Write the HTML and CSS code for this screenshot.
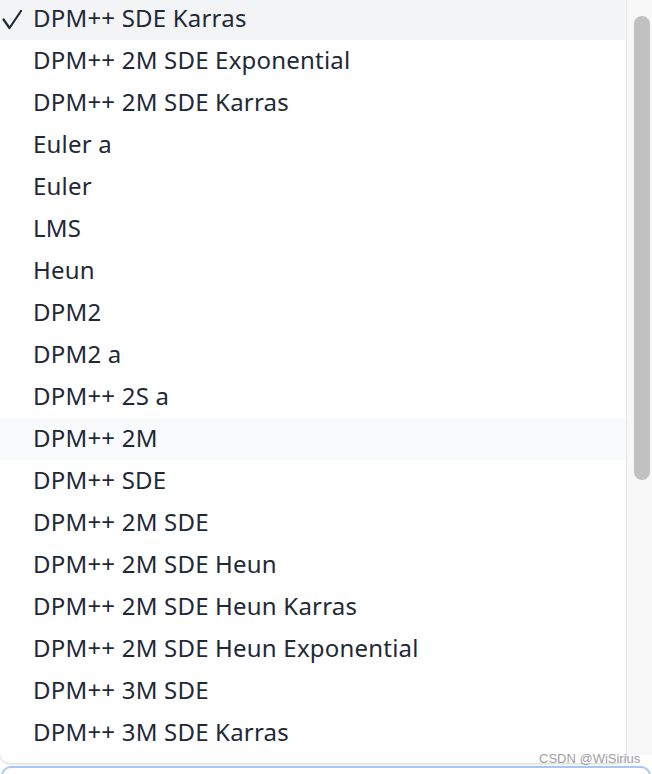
FILE: index.html
```html
<!DOCTYPE html>
<html>
<head>
<meta charset="utf-8">
<link rel="stylesheet" href="styles.css">
</head>
<body>
<div class="page">
  <div class="top">
    <div class="card">
      <ul class="options">
        <li class="option selected"><svg class="check" width="24" height="24" viewBox="0 0 24 24"><path d="M3.5 13.5 L9.5 22 L21 5" fill="none" stroke="#1f2937" stroke-width="2.2" stroke-linecap="round" stroke-linejoin="round"/></svg>DPM++ SDE Karras</li>
        <li class="option">DPM++ 2M SDE Exponential</li>
        <li class="option">DPM++ 2M SDE Karras</li>
        <li class="option">Euler a</li>
        <li class="option">Euler</li>
        <li class="option">LMS</li>
        <li class="option">Heun</li>
        <li class="option">DPM2</li>
        <li class="option">DPM2 a</li>
        <li class="option">DPM++ 2S a</li>
        <li class="option hover">DPM++ 2M</li>
        <li class="option">DPM++ SDE</li>
        <li class="option">DPM++ 2M SDE</li>
        <li class="option">DPM++ 2M SDE Heun</li>
        <li class="option">DPM++ 2M SDE Heun Karras</li>
        <li class="option">DPM++ 2M SDE Heun Exponential</li>
        <li class="option">DPM++ 3M SDE</li>
        <li class="option">DPM++ 3M SDE Karras</li>
      </ul>
    </div>
    <div class="track"><div class="thumb"></div></div>
  </div>
  <div class="input"></div>
  <div class="watermark">CSDN @WiSirius</div>
</div>
</body>
</html>
```
FILE: styles.css
```css
html, body {
  margin: 0;
  padding: 0;
  background: #ffffff;
  overflow: hidden;
}
.page {
  position: relative;
  width: 652px;
  height: 774px;
  overflow: hidden;
}
.top {
  display: flex;
  height: 763px;
}
.card {
  width: 627px;
  height: 763px;
  overflow: hidden;
  border-right: 1px solid #e6e6e6;
  border-radius: 0 0 10px 10px;
  box-shadow: 0 1px 3px rgba(0, 0, 0, 0.18);
  background: #ffffff;
  box-sizing: border-box;
}
.options {
  list-style: none;
  margin: -2px 0 0 0;
  padding: 0;
}
.option {
  position: relative;
  height: 42px;
  line-height: 40px;
  padding-left: 33px;
  font-family: "Noto Sans", "Open Sans", sans-serif;
  font-size: 24px;
  letter-spacing: 0.2px;
  color: #1f2937;
  white-space: nowrap;
}
.option.selected {
  background: #f3f4f6;
}
.option.hover {
  background: #f9fafb;
}
.check {
  position: absolute;
  left: 0;
  top: 8px;
}
.track {
  width: 25px;
  height: 755px;
  background: #f8f8f8;
  display: flex;
  justify-content: center;
  padding-top: 16px;
  box-sizing: border-box;
}
.thumb {
  width: 16px;
  height: 464px;
  margin-left: 5px;
  border-radius: 8px;
  background: #c1c1c1;
}
.input {
  margin: 3px 1px 0 1px;
  height: 30px;
  border: 2px solid #a7c7f2;
  border-radius: 10px;
  box-sizing: border-box;
}
.watermark {
  position: absolute;
  left: 539px;
  top: 751px;
  font-family: "Liberation Sans", Arial, sans-serif;
  font-size: 13px;
  color: #9aa0a6;
}
```
